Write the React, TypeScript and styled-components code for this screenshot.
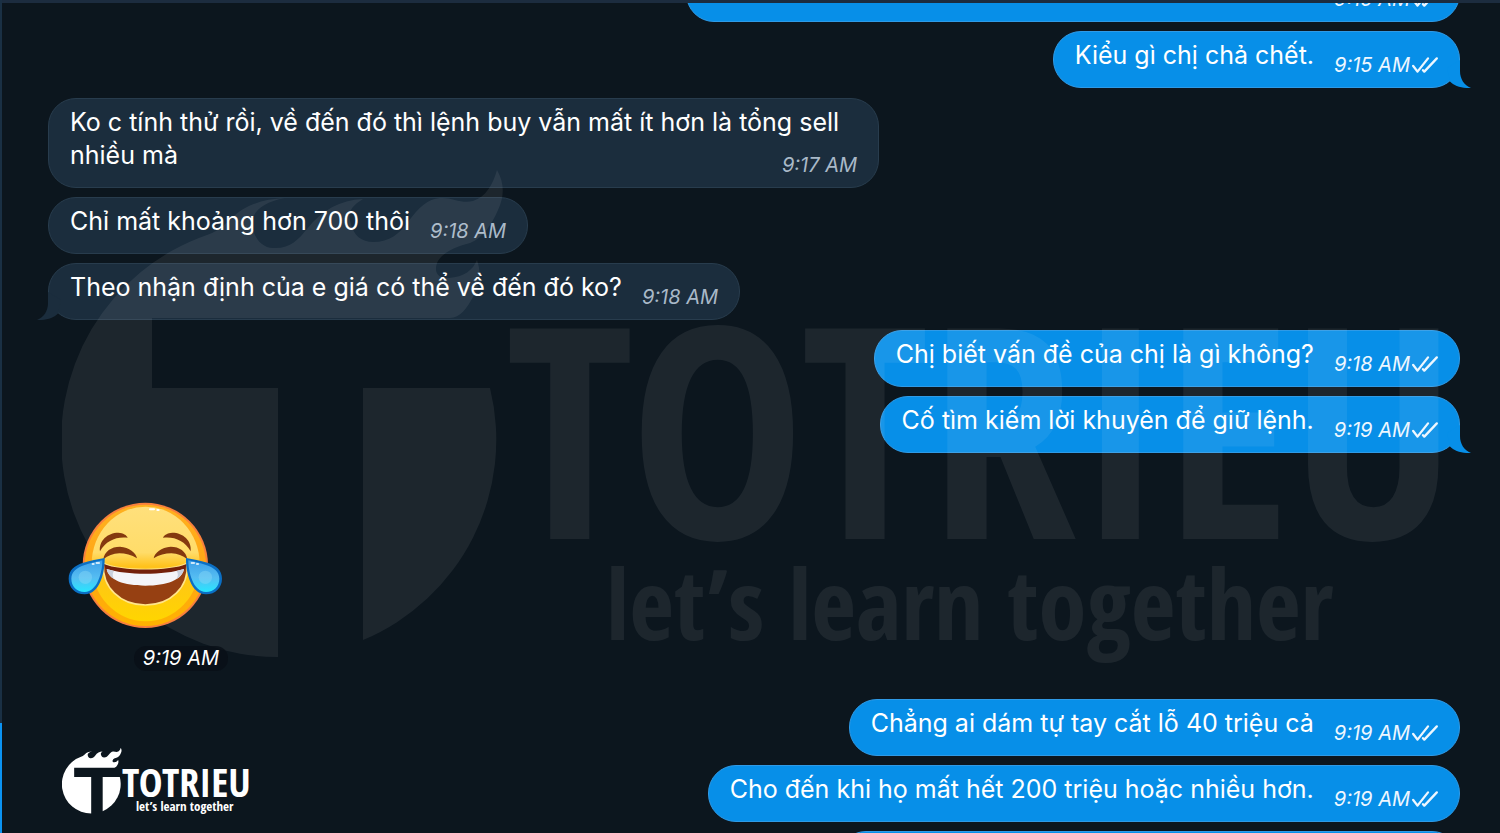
import React from 'react';
import styled, { createGlobalStyle } from 'styled-components';

const GlobalStyle = createGlobalStyle`
  * { box-sizing: border-box; }
  body {
    margin: 0;
    background: #0c161e;
    font-family: Inter, 'Noto Sans', 'Liberation Sans', sans-serif;
  }
`;

const Page = styled.div`
  display: flex;
  height: 100vh;
  overflow: hidden;
  background: #0c161e;
`;

const Rail = styled.div`
  display: flex;
  flex-direction: column;
  flex: none;
  width: 2px;
`;

const RailPart = styled.div<{ $active?: boolean }>`
  flex: ${p => (p.$active ? '0 0 110px' : '1')};
  background: ${p => (p.$active ? '#0b93f2' : '#1a3044')};
`;

const Chat = styled.main`
  position: relative;
  display: flex;
  flex-direction: column;
  flex: 1;
  min-width: 0;
`;

const HeaderEdge = styled.div`
  flex: none;
  height: 3px;
  background: #1c2c3f;
`;

const Viewport = styled.div`
  flex: 1;
  min-height: 0;
  overflow: hidden;
`;

const Thread = styled.div`
  display: flex;
  flex-direction: column;
  gap: 10px;
  margin-top: -38px;
  padding: 0 40px 0 46px;
`;

const Group = styled.section<{ $out?: boolean }>`
  display: flex;
  flex-direction: column;
  align-items: ${p => (p.$out ? 'flex-end' : 'flex-start')};
  gap: 9px;
`;

const Bubble = styled.article<{ $out?: boolean; $min?: number }>`
  position: relative;
  display: flow-root;
  flex: none;
  min-width: ${p => p.$min ?? 0}px;
  max-width: min(100%, 831px);
  min-height: 57px;
  padding: 7px 21px 10px;
  border: 1px solid ${p => (p.$out ? '#2f9ae6' : '#283c4d')};
  border-radius: 28px;
  background: ${p => (p.$out ? '#078fe8' : '#1b2d3d')};
  color: #ffffff;
  font-size: 25px;
  line-height: 33px;
`;

const Stamp = styled.span<{ $out?: boolean }>`
  float: right;
  display: flex;
  align-items: center;
  gap: 2px;
  margin: 14px 0 0 20px;
  color: ${p => (p.$out ? '#eef7ff' : '#a9b9c8')};
  font-size: 20px;
  font-style: italic;
  line-height: 24px;
  white-space: nowrap;
`;

const TailSvg = styled.svg<{ $out?: boolean }>`
  position: absolute;
  bottom: -1px;
  ${p => (p.$out ? 'right: -12px;' : 'left: -12px; transform: scaleX(-1);')}
  width: 24px;
  height: 28px;
  fill: ${p => (p.$out ? '#078fe8' : '#1b2d3d')};
`;

const StickerMessage = styled.article`
  position: relative;
  z-index: 2;
  display: flex;
  flex-direction: column;
  align-items: flex-end;
  gap: 17px;
  width: 180px;
  padding: 39px 0 18px;
`;

const StickerArt = styled.svg`
  align-self: center;
  width: 154px;
  height: 127px;
  margin-left: 14px;
`;

const StickerStamp = styled.span`
  padding: 0 9px;
  border-radius: 12px;
  background: rgba(9, 15, 22, 0.8);
  color: #ffffff;
  font-size: 20px;
  font-style: italic;
  line-height: 25px;
`;

const Watermark = styled.div`
  position: absolute;
  z-index: 1;
  top: 168px;
  left: 60px;
  opacity: 0.066;
  pointer-events: none;
`;

const CornerLogo = styled.div`
  position: absolute;
  z-index: 2;
  left: 60px;
  bottom: 17px;
`;

const LogoRow = styled.div`
  display: flex;
  align-items: flex-start;
  color: #ffffff;
  font-family: 'Open Sans Condensed', 'Roboto Condensed', 'Open Sans', sans-serif;
  font-weight: 700;
  white-space: nowrap;
`;

const Mark = styled.svg<{ $large?: boolean }>`
  flex: none;
  width: ${p => (p.$large ? 444 : 60)}px;
  height: ${p => (p.$large ? 490 : 67)}px;
  fill: currentColor;
`;

const LogoText = styled.div<{ $large?: boolean }>`
  display: flex;
  flex-direction: column;
  padding-top: ${p => (p.$large ? 141 : 19)}px;
`;

const LogoName = styled.span<{ $large?: boolean }>`
  font-size: ${p => (p.$large ? 295 : 40)}px;
  line-height: ${p => (p.$large ? 232 : 31)}px;
`;

const LogoSlogan = styled.span<{ $large?: boolean }>`
  padding-left: ${p => (p.$large ? 100 : 14)}px;
  font-size: ${p => (p.$large ? 97 : 13)}px;
  line-height: ${p => (p.$large ? 122 : 19)}px;
`;

function Ticks() {
  return (
    <svg width="26" height="17" viewBox="0 0 26 17" fill="none" stroke="currentColor" strokeWidth="2.3" strokeLinecap="round" strokeLinejoin="round" aria-label="Read">
      <path d="M1.2 9 L5.5 14.6 L16 1.4" />
      <path d="M11 13.2 L12.3 14.6 L24.8 1.4" />
    </svg>
  );
}

function Tail({ out }: { out?: boolean }) {
  return (
    <TailSvg $out={out} viewBox="0 0 24 28" aria-hidden="true">
      <path d="M13 0 V11 C13 19 17 25 24 28 C15 28.5 7 26 3 21.5 L0 8 Z" />
    </TailSvg>
  );
}

type MessageProps = { text?: string; time?: string; out?: boolean; tail?: boolean; min?: number };

function Message({ text, time, out, tail, min }: MessageProps) {
  return (
    <Bubble $out={out} $min={min}>
      {text}
      {time && (
        <Stamp $out={out}>
          <time>{time}</time>
          {out && <Ticks />}
        </Stamp>
      )}
      {tail && <Tail out={out} />}
    </Bubble>
  );
}

function Logo({ large }: { large?: boolean }) {
  return (
    <LogoRow>
      <Mark $large={large} viewBox="62 168 444 490" aria-hidden="true">
        <path d="M278 657 A217 217 0 0 1 207 235 C222 230 226 222 232 218 C243 206 262 199 285 198 C262 202 252 213 252 223 C253 238 262 248 273 248 C290 249 298 240 307 229 C322 210 340 200 363 199 C351 206 348 213 350 221 C353 236 362 242 373 242 C390 242 399 234 408 222 C419 207 428 199 440 198 C452 197 461 204 473 201 C486 197 493 184 497 170 C505 184 504 197 498 210 C492 224 483 238 470 243 C453 247 441 254 437 263 C433 275 441 279 449 278 C464 277 473 270 477 260 C482 275 479 287 473 297 C467 308 460 318 450 318 H152 V388 H278 Z" />
        <path d="M363 388 H490 A217 217 0 0 1 363 640 Z" />
      </Mark>
      <LogoText $large={large}>
        <LogoName $large={large}>TOTRIEU</LogoName>
        <LogoSlogan $large={large}>let’s learn together</LogoSlogan>
      </LogoText>
    </LogoRow>
  );
}

function FaceHalf() {
  return (
    <g>
      <path fill="#84390f" d="M180 184 C176 152 203 128 235 128 C250 129 260 135 263 143 C228 139 198 152 180 184 Z" />
      <path fill="#84390f" d="M190 208 C193 184 214 170 240 170 C268 172 288 188 291 205 C275 195 256 190 238 190 C219 191 204 197 190 208 Z" />
    </g>
  );
}

function Tear() {
  return (
    <g>
      <path fill="#0b6fc4" d="M194 204 C195 245 180 313 134 313 C105 313 86 292 86 266 C86 240 104 226 130 218 C152 211 172 208 194 204 Z" />
      <path fill="url(#tear)" d="M187 211 C187 245 173 306 134 306 C110 306 94 288 94 266 C94 245 110 233 134 225 C153 218 170 215 187 211 Z" />
      <circle cx="136" cy="262" r="20" fill="#8fdcf7" opacity="0.4" />
      <path d="M157 222 H162 M169 219 H178" stroke="#ffffff" strokeWidth="4" strokeLinecap="round" />
    </g>
  );
}

function JoySticker() {
  return (
    <StickerArt viewBox="84 36 462 381" role="img" aria-label="Face with tears of joy">
      <defs>
        <linearGradient id="face" x1="0" y1="0" x2="0" y2="1">
          <stop offset="0" stopColor="#ffe07c" />
          <stop offset="0.4" stopColor="#ffdc69" />
          <stop offset="0.52" stopColor="#ffc21c" />
          <stop offset="1" stopColor="#ffd500" />
        </linearGradient>
        <linearGradient id="rim" x1="0" y1="0" x2="0" y2="1">
          <stop offset="0" stopColor="#ffb01f" />
          <stop offset="0.6" stopColor="#ffa514" />
          <stop offset="1" stopColor="#ffb300" />
        </linearGradient>
        <linearGradient id="tear" x1="0" y1="0" x2="0" y2="1">
          <stop offset="0" stopColor="#3d9fe8" />
          <stop offset="0.55" stopColor="#55bdf2" />
          <stop offset="1" stopColor="#27e6ff" />
        </linearGradient>
      </defs>
      <circle cx="316" cy="226" r="188" fill="#f9803c" />
      <circle cx="316" cy="226" r="182" fill="url(#rim)" />
      <ellipse cx="317" cy="222" rx="162" ry="172" fill="url(#face)" />
      <path d="M330 58 H342 M352 60 H356" stroke="#ffffff" strokeWidth="6" strokeLinecap="round" />
      <FaceHalf />
      <g transform="matrix(-1 0 0 1 632 0)">
        <FaceHalf />
      </g>
      <path fill="#964012" stroke="#ffe58a" strokeWidth="5" d="M190 220 C240 245 392 245 442 220 C446 292 392 345 316 345 C240 345 186 292 190 220 Z" />
      <path fill="#74200a" d="M192 222 C240 244 392 244 440 222 L434 240 C370 262 262 262 198 240 Z" />
      <path fill="#f4f4f8" d="M200 237 C260 256 372 256 432 237 C427 270 380 287 316 287 C252 287 205 270 200 237 Z" />
      <path fill="#c9d0dd" d="M200 237 L222 243 C216 252 218 262 224 268 C210 260 202 250 200 237 Z M432 237 L410 243 C416 252 414 262 408 268 C422 260 430 250 432 237 Z" />
      <Tear />
      <g transform="matrix(-1 0 0 1 632 0)">
        <Tear />
      </g>
    </StickerArt>
  );
}

export default function App() {
  return (
    <>
      <GlobalStyle />
      <Page>
        <Rail>
          <RailPart />
          <RailPart $active />
        </Rail>
        <Chat>
          <HeaderEdge />
          <Viewport>
            <Thread>
              <Group $out>
                <Message out min={774} time="9:15 AM" />
                <Message out tail text="Kiểu gì chị chả chết." time="9:15 AM" />
              </Group>
              <Group>
                <Message text="Ko c tính thử rồi, về đến đó thì lệnh buy vẫn mất ít hơn là tổng sell nhiều mà" time="9:17 AM" />
                <Message text="Chỉ mất khoảng hơn 700 thôi" time="9:18 AM" />
                <Message tail text="Theo nhận định của e giá có thể về đến đó ko?" time="9:18 AM" />
              </Group>
              <Group $out>
                <Message out text="Chị biết vấn đề của chị là gì không?" time="9:18 AM" />
                <Message out tail text="Cố tìm kiếm lời khuyên để giữ lệnh." time="9:19 AM" />
              </Group>
              <Group>
                <StickerMessage>
                  <JoySticker />
                  <StickerStamp>
                    <time>9:19 AM</time>
                  </StickerStamp>
                </StickerMessage>
              </Group>
              <Group $out>
                <Message out text="Chẳng ai dám tự tay cắt lỗ 40 triệu cả" time="9:19 AM" />
                <Message out text="Cho đến khi họ mất hết 200 triệu hoặc nhiều hơn." time="9:19 AM" />
                <Message out min={622} />
              </Group>
            </Thread>
          </Viewport>
          <Watermark aria-hidden="true">
            <Logo large />
          </Watermark>
          <CornerLogo>
            <Logo />
          </CornerLogo>
        </Chat>
      </Page>
    </>
  );
}
